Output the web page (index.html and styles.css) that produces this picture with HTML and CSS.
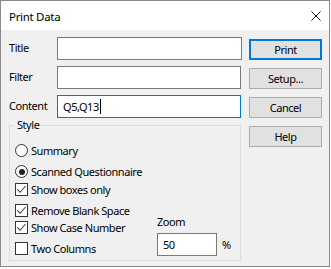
FILE: index.html
```html
<!DOCTYPE html>
<html lang="en">
<head>
    <meta charset="UTF-8">
    <title>Print Data</title>
    <link rel="stylesheet" href="styles.css">
</head>
<body>

    <div class="window">
        <!-- Title bar -->
        <div class="titlebar">
            <span class="title">Print Data</span>
            <svg class="close" width="10" height="10" viewBox="0 0 10 10">
                <path d="M0.5 0.5 L9.5 9.5 M9.5 0.5 L0.5 9.5" stroke="#111" stroke-width="1" fill="none"/>
            </svg>
        </div>

        <div class="content">
            <div class="left">
                <div class="field">
                    <span class="label">Title</span>
                    <div class="textbox wide"></div>
                </div>
                <div class="field">
                    <span class="label">Filter</span>
                    <div class="textbox"></div>
                </div>
                <div class="field">
                    <span class="label">Content</span>
                    <div class="textbox focused">Q5,Q13<span class="caret"></span></div>
                </div>

                <fieldset class="group">
                    <legend>Style</legend>
                    <div class="options">
                        <div class="opt"><span class="radio"></span>Summary</div>
                        <div class="opt sep"><span class="radio checked"></span>Scanned Questionnaire</div>
                        <div class="opt"><span class="check"><svg width="11" height="11" viewBox="0 0 11 11"><path d="M1.5 5.5 L4.2 8.3 L9.5 2" stroke="#444" stroke-width="1.1" fill="none"/></svg></span>Show boxes only</div>
                        <div class="opt sep"><span class="check"><svg width="11" height="11" viewBox="0 0 11 11"><path d="M1.5 5.5 L4.2 8.3 L9.5 2" stroke="#444" stroke-width="1.1" fill="none"/></svg></span>Remove Blank Space</div>
                        <div class="opt tight"><span class="check"><svg width="11" height="11" viewBox="0 0 11 11"><path d="M1.5 5.5 L4.2 8.3 L9.5 2" stroke="#444" stroke-width="1.1" fill="none"/></svg></span>Show Case Number</div>
                        <div class="opt sep"><span class="check"></span>Two Columns</div>
                    </div>
                    <div class="zoom">
                        <span class="zoom-label">Zoom</span>
                        <div class="zoom-row">
                            <div class="textbox small">50</div>
                            <span class="percent">%</span>
                        </div>
                    </div>
                </fieldset>
            </div>

            <div class="buttons">
                <div class="button default">Print</div>
                <div class="button">Setup...</div>
                <div class="button">Cancel</div>
                <div class="button">Help</div>
            </div>
        </div>
    </div>

</body>
</html>
```

FILE: styles.css
```css
body {
    margin: 0;
    padding: 0;
    background-color: #ffffff;
    font-family: 'Noto Sans', sans-serif;
    font-size: 11px;
    letter-spacing: -0.45px;
    color: #000;
}

.window {
    width: 330px;
    height: 267px;
    box-sizing: border-box;
    border: 1px solid #8a8a8a;
    display: flex;
    flex-direction: column;
    background: #f0f0f0;
}

.titlebar {
    height: 29px;
    background: #ffffff;
    display: flex;
    align-items: center;
    justify-content: space-between;
    padding: 0 8px 0 8px;
}

.title {
    font-size: 11.5px;
    letter-spacing: -0.3px;
    margin-top: 1px;
}

.close {
    margin-right: 0;
    margin-top: 1px;
}

.content {
    display: flex;
    padding: 7px 0 0 8px;
}

.left {
    width: 233px;
}

.field {
    display: flex;
    align-items: center;
    height: 23px;
    margin-bottom: 6px;
}

.field + .field {
    margin-top: 1px;
}

.label {
    width: 48px;
    margin-top: -2px;
}

.textbox {
    width: 184px;
    height: 23px;
    box-sizing: border-box;
    border: 1px solid #7a7a7a;
    background: #fff;
    padding: 0 5px;
    display: flex;
    align-items: center;
}

.textbox.wide {
    width: 185px;
}

.textbox.focused {
    border-color: #0078d7;
}

.caret {
    width: 1px;
    height: 15px;
    background: #000;
    margin-left: 1px;
}

.textbox.small {
    width: 60px;
}

/* Style group */
.group {
    margin: -5px 0 0 0;
    width: 232px;
    box-sizing: border-box;
    border: 1px solid #dcdcdc;
    padding: 13px 5px 4px 5px;
    display: flex;
    align-items: flex-end;
}

.group legend {
    padding: 0 2px;
    margin-left: 0;
    line-height: 12px;
}

.options {
    width: 142px;
    display: flex;
    flex-direction: column;
    padding-bottom: 1px;
}

.opt {
    display: flex;
    align-items: center;
    height: 13px;
    margin-top: 5px;
    white-space: nowrap;
}

.opt:first-child {
    margin-top: 0;
}

.opt.sep {
    margin-top: 8px;
}

.opt.tight {
    margin-top: 4px;
}

.radio,
.check {
    width: 13px;
    height: 13px;
    box-sizing: border-box;
    border: 1px solid #333;
    background: #fff;
    margin-right: 3px;
    flex-shrink: 0;
    display: flex;
    align-items: center;
    justify-content: center;
}

.radio {
    border-radius: 50%;
}

.radio.checked::after {
    content: "";
    width: 6px;
    height: 6px;
    border-radius: 50%;
    background: #222;
}

.zoom {
    display: flex;
    flex-direction: column;
}

.zoom-label {
    line-height: 14px;
    margin-bottom: 4px;
}

.zoom-row {
    display: flex;
    align-items: center;
}

.percent {
    margin-left: 5px;
}

/* Buttons */
.buttons {
    display: flex;
    flex-direction: column;
    margin-left: 7px;
    padding-top: 2px;
}

.button {
    width: 73px;
    height: 21px;
    box-sizing: border-box;
    border: 1px solid #adadad;
    background: #e1e1e1;
    display: flex;
    align-items: center;
    justify-content: center;
    margin-bottom: 8px;
}

.button.default {
    border: 2px solid #0078d7;
}
```
